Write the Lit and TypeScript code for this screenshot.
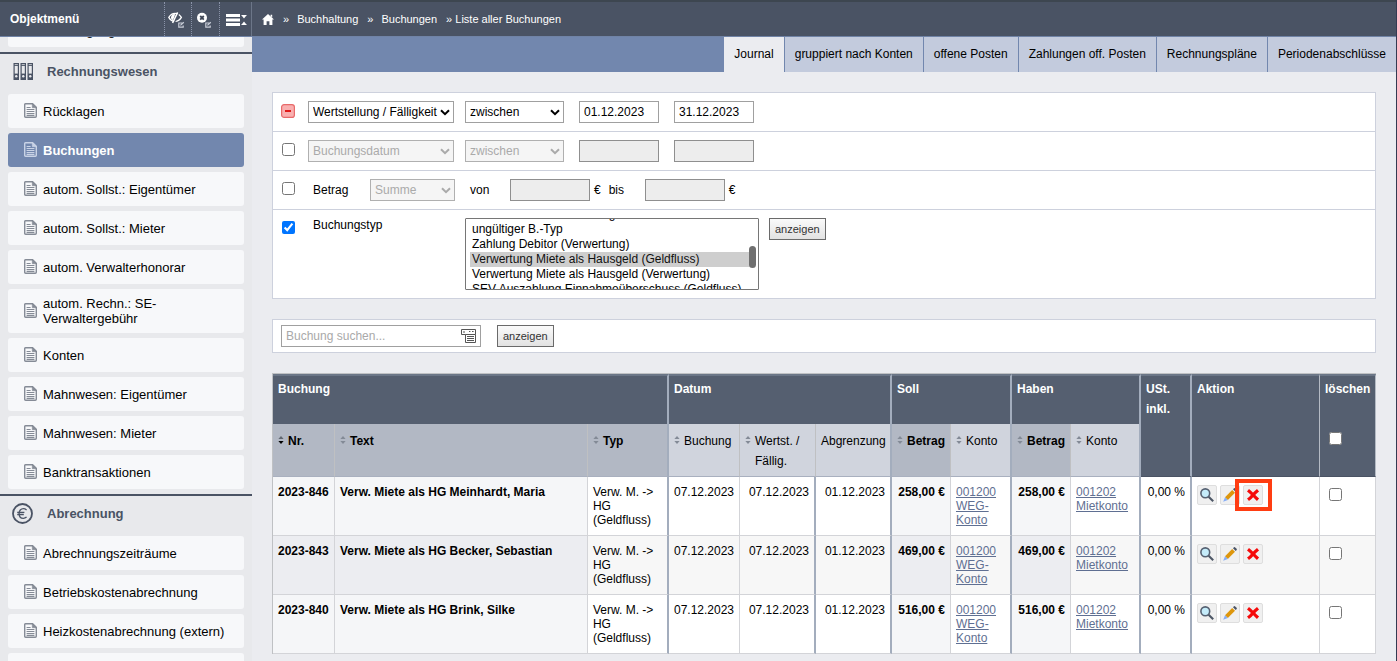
import { LitElement, html, svg, css, nothing } from "lit";
import { customElement } from "lit/decorators.js";
import { classMap } from "lit/directives/class-map.js";

interface MenuItem {
  label: string;
  active?: boolean;
}

interface Booking {
  nr: string;
  text: string;
  amount: string;
  marked?: boolean;
}

const ACCOUNTING: MenuItem[] = [
  { label: "Rücklagen" },
  { label: "Buchungen", active: true },
  { label: "autom. Sollst.: Eigentümer" },
  { label: "autom. Sollst.: Mieter" },
  { label: "autom. Verwalterhonorar" },
  { label: "autom. Rechn.: SE-Verwaltergebühr" },
  { label: "Konten" },
  { label: "Mahnwesen: Eigentümer" },
  { label: "Mahnwesen: Mieter" },
  { label: "Banktransaktionen" },
];

const BILLING: MenuItem[] = [
  { label: "Abrechnungszeiträume" },
  { label: "Betriebskostenabrechnung" },
  { label: "Heizkostenabrechnung (extern)" },
  { label: "Wirtschaftsplan" },
];

const TABS = [
  "Journal",
  "gruppiert nach Konten",
  "offene Posten",
  "Zahlungen off. Posten",
  "Rechnungspläne",
  "Periodenabschlüsse",
];

const TYPES = [
  "interne Mietkonto-Buchung",
  "ungültiger B.-Typ",
  "Zahlung Debitor (Verwertung)",
  "Verwertung Miete als Hausgeld (Geldfluss)",
  "Verwertung Miete als Hausgeld (Verwertung)",
  "SEV Auszahlung Einnahmeüberschuss (Geldfluss)",
  "SEV Auszahlung Einnahmeüberschuss (Verwertung)",
];

const BOOKINGS: Booking[] = [
  { nr: "2023-846", text: "Verw. Miete als HG Meinhardt, Maria", amount: "258,00 €", marked: true },
  { nr: "2023-843", text: "Verw. Miete als HG Becker, Sebastian", amount: "469,00 €" },
  { nr: "2023-840", text: "Verw. Miete als HG Brink, Silke", amount: "516,00 €" },
];

const docIcon = html`<svg class="doc" width="13" height="15" viewBox="0 0 13 15" aria-hidden="true">
  <path d="M1.5 .7H8.6L12.3 4.4V13.3Q12.3 14.3 11.3 14.3H1.7Q.7 14.3 .7 13.3V1.7Q.7 .7 1.5 .7Z" fill="none" stroke="currentColor" stroke-width="1.4"/>
  <path d="M8.3 .8V4.7H12.2Z" fill="currentColor" stroke="currentColor" stroke-width=".6"/>
  <path d="M2.6 4.5H6.6M2.6 6.5H10.4M2.6 8.5H10.4M2.6 10.5H10.4M2.6 12.4H10.4" stroke="currentColor" stroke-width="1.2"/>
</svg>`;

const binder = (x: number) => svg`<g transform="translate(${x} 0)">
  <rect x=".6" y=".6" width="4.3" height="15.8" fill="none" stroke="currentColor" stroke-width="1.2"/>
  <path d="M.6 2.4H4.9" stroke="currentColor" stroke-width="1"/>
  <rect x=".6" y="10.6" width="4.3" height="5.8" fill="currentColor"/>
  <circle cx="2.75" cy="13.2" r="1.2" fill="#e8e9ec"/>
</g>`;

const bindersIcon = html`<svg width="21" height="17" viewBox="0 0 21 17" aria-hidden="true">
  ${binder(1.5)}${binder(8.5)}${binder(15.5)}
</svg>`;

const euroIcon = html`<svg width="21" height="21" viewBox="0 0 21 21" aria-hidden="true" fill="none" stroke="currentColor">
  <circle cx="10.5" cy="10.5" r="9.5" stroke-width="1.8"/>
  <path d="M14.6 6.9Q13 5.6 11.4 5.6C8.8 5.6 7.1 7.7 7.1 10.5S8.8 15.4 11.4 15.4Q13 15.4 14.6 14.1M5.2 9.4H12.4M5.2 11.5H11.8" stroke-width="1.3"/>
</svg>`;

const editMark = svg`<path d="M14.4 11H10.8V15.2H15.2V13.4M12.4 13.4L15.8 10.2" fill="none" stroke="#c9ced8" stroke-width="1.2"/>`;

const eyeIcon = html`<svg width="17" height="17" viewBox="0 0 17 17" aria-hidden="true">
  <path d="M.8 5.4Q3.2 1.4 7 1.4T13.4 5.4Q11 9.4 7 9.4T.8 5.4Z" fill="none" stroke="#fff" stroke-width="1.3"/>
  <path d="M7.2 2.2A3.200 3.200 0 0 0 5 8.2Z" fill="#fff"/>
  <path d="M11 .4L6 11.2" stroke="#4a5364" stroke-width="1.4"/>
  <path d="M9.6 .4L4.6 11" stroke="#fff" stroke-width="1.5"/>
  ${editMark}
</svg>`;

const closeIcon = html`<svg width="17" height="17" viewBox="0 0 17 17" aria-hidden="true">
  <circle cx="7" cy="5.8" r="5" fill="#fff"/>
  <path d="M5.2 4L8.8 7.6M8.8 4L5.2 7.6" stroke="#3d4554" stroke-width="1.8"/>
  ${editMark}
</svg>`;

const barsIcon = html`<svg width="22" height="12" viewBox="0 0 22 12" aria-hidden="true" fill="#fff">
  <rect x="0" y="0" width="14" height="3"/><rect x="0" y="4.5" width="14" height="3"/><rect x="0" y="9" width="14" height="3"/>
  <path d="M15.5 1H20.5V2H20L18 4.400L16 2H15.500ZM15.5 11V10H16L18 7.600L20 10H20.500V11Z"/>
</svg>`;

const homeIcon = html`<svg width="12" height="11" viewBox="0 0 12 11" aria-hidden="true" fill="#fff">
  <path d="M6 0L12 5.6H10.4V11H7.4V7.2H4.6V11H1.6V5.6H0ZM8.6 .7H10.2V3.4L8.6 2Z"/>
</svg>`;

const listIcon = html`<svg class="list-icon" width="16" height="15" viewBox="0 0 16 15" aria-hidden="true" fill="none" stroke="#555" stroke-width="1">
  <path d="M4.5 5.5H.5V.5H14.5V5.5M3 2V4M8 2.5H9.4M11 2.5H12.6M4.5 5.5H14.5V13.5H4.5ZM6 7.5H13M6 9.5H13M6 11.5H13"/>
</svg>`;

const minusIcon = html`<svg width="14" height="14" viewBox="0 0 14 14" aria-hidden="true">
  <rect x=".6" y=".6" width="12.8" height="12.8" rx="2.5" fill="#f9b0b0" stroke="#e86a6a" stroke-width="1.2"/>
  <rect x="4" y="6" width="6" height="2" fill="#e01b1b"/>
</svg>`;

const lensIcon = html`<svg width="16" height="16" viewBox="0 0 16 16" aria-hidden="true">
  <path d="M9.6 9.8L14.2 14.2" stroke="#4d5766" stroke-width="2.2"/>
  <circle cx="6.3" cy="6.3" r="4.4" fill="#c5ecfa" stroke="#566172" stroke-width="1.6"/>
</svg>`;

const pencilIcon = html`<svg width="16" height="16" viewBox="0 0 16 16" aria-hidden="true">
  <path d="M3 10.2L10.2 3L13 5.8L5.8 13Z" fill="#dd960c"/>
  <path d="M3 10.2L5.8 13L1.2 14.8Z" fill="#86adf5"/>
  <path d="M11 2.3L12 1.3Q12.6 .9 13.2 1.4L14.6 2.8Q15.1 3.4 14.7 4L13.7 5Z" fill="#4a5364"/>
</svg>`;

const crossIcon = html`<svg width="16" height="16" viewBox="0 0 16 16" aria-hidden="true">
  <path d="M3 3.2Q6 5.6 8.2 8T13 12.8M13 3.2Q9.6 6 7.6 8.4T3 12.8" fill="none" stroke="#f50a0a" stroke-width="3.2"/>
</svg>`;

const sorter = (down = false) => html`<svg class="sorter" width="6" height="8" viewBox="0 0 6 8" aria-hidden="true">
  <path d="M3 0L5.6 3H.4Z" fill=${down ? "#5f6670" : "#838a96"}/>
  <path d="M3 8L.4 5H5.6Z" fill=${down ? "#000" : "#838a96"}/>
</svg>`;

@customElement("app-topbar")
export class AppTopbar extends LitElement {
  static styles = css`
    :host {
      display: flex;
      box-sizing: border-box;
      height: 37px;
      border-top: 2px solid #3d4650;
      border-bottom: 1px solid #7083a6;
      background: #4a5364;
      color: #fff;
    }
    .brand {
      display: flex;
      flex: none;
      box-sizing: border-box;
      width: 252px;
      border-right: 1px solid #6c7688;
    }
    .title {
      flex: 1;
      margin: 0;
      padding-left: 10px;
      font-size: 12px;
      line-height: 34px;
    }
    .tool {
      display: flex;
      align-items: center;
      box-sizing: border-box;
      width: 27px;
      padding: 2px 0 0 3px;
      border: 0;
      border-left: 1px dotted #8a93a8;
      background: none;
    }
    .tool + .tool {
      width: 28px;
    }
    .tool.wide {
      width: 32px;
      padding-left: 6px;
    }
    .crumbs {
      display: flex;
      align-items: center;
      gap: 8px;
      padding-left: 10px;
      font-size: 11px;
      line-height: 14px;
    }
    .crumbs a {
      display: flex;
      color: #fff;
      text-decoration: none;
    }
    .crumbs a + span {
      padding-left: 1px;
    }
  `;

  render() {
    return html`
      <div class="brand">
        <h1 class="title">Objektmenü</h1>
        <button class="tool" aria-label="Ausblenden">${eyeIcon}</button>
        <button class="tool" aria-label="Schließen">${closeIcon}</button>
        <button class="tool wide" aria-label="Menü zuklappen">${barsIcon}</button>
      </div>
      <nav class="crumbs" aria-label="Brotkrumen">
        <a href="#" aria-label="Startseite">${homeIcon}</a>
        <span>»</span>
        <a href="#">Buchhaltung</a>
        <span>»</span>
        <a href="#">Buchungen</a>
        <span>» Liste aller Buchungen</span>
      </nav>
    `;
  }
}

@customElement("app-sidebar")
export class AppSidebar extends LitElement {
  static styles = css`
    :host {
      display: block;
      box-sizing: border-box;
      width: 252px;
      padding-top: 5px;
      overflow-y: auto;
      scrollbar-width: none;
      background: #e8e9ec;
    }
    .group {
      display: flex;
      flex-direction: column;
      gap: 5px;
      margin: 0;
      padding: 0 8px 5px;
      list-style: none;
    }
    .item {
      display: flex;
      align-items: center;
      gap: 6px;
      box-sizing: border-box;
      min-height: 34px;
      padding: 7px 8px 7px 16px;
      border-radius: 3px;
      background: #f7f8fa;
      color: #000;
      font-size: 13px;
      line-height: 15px;
      text-decoration: none;
    }
    .item.active {
      background: #7287ae;
      color: #fff;
      font-weight: bold;
    }
    .doc {
      flex: none;
      margin-bottom: 2px;
      color: #858b96;
    }
    .active .doc {
      color: #c9d3e6;
    }
    .section {
      display: flex;
      align-items: center;
      box-sizing: border-box;
      height: 42px;
      margin: 0;
      padding: 0 0 5px 12px;
      border-top: 2px solid #4a5364;
      color: #4a5364;
      font-size: 13px;
      line-height: 15px;
    }
    .section svg {
      margin-right: 14px;
    }
  `;

  firstUpdated() {
    this.scrollTop = 29;
  }

  private items(list: MenuItem[]) {
    return html`<ul class="group">
      ${list.map(
        (item) => html`<li>
          <a class=${classMap({ item: true, active: !!item.active })} href="#">${docIcon}<span>${item.label}</span></a>
        </li>`
      )}
    </ul>`;
  }

  render() {
    return html`
      ${this.items([{ label: "Übertragung" }])}
      <h2 class="section">${bindersIcon}Rechnungswesen</h2>
      ${this.items(ACCOUNTING)}
      <h2 class="section">${euroIcon}Abrechnung</h2>
      ${this.items(BILLING)}
    `;
  }
}

const controls = css`
  input[type="text"],
  select {
    box-sizing: border-box;
    height: 22px;
    margin: 0;
    padding: 0 4px;
    border: 1px solid #a0a0a0;
    border-radius: 0;
    background-color: #fff;
    color: #000;
    font: 12px/15px "Liberation Sans", Arial, sans-serif;
  }
  input[type="text"]:disabled {
    border-color: #8f8f8f;
    background-color: #ededed;
  }
  input[type="checkbox"] {
    display: block;
    width: 13px;
    height: 13px;
    margin: 0;
  }
  .drop {
    appearance: none;
    background-image: url("data:image/svg+xml,%3Csvg xmlns='http://www.w3.org/2000/svg' width='10' height='7'%3E%3Cpath d='M1 1.2L5 5.2L9 1.2' fill='none' stroke='%23000' stroke-width='2'/%3E%3C/svg%3E");
    background-repeat: no-repeat;
    background-position: right 3px center;
  }
  .drop:disabled {
    border-color: #b0b0b0;
    background-color: #f5f5f5;
    background-image: url("data:image/svg+xml,%3Csvg xmlns='http://www.w3.org/2000/svg' width='10' height='7'%3E%3Cpath d='M1 1.2L5 5.2L9 1.2' fill='none' stroke='%23aaa' stroke-width='2'/%3E%3C/svg%3E");
    color: #aaa;
    opacity: 1;
  }
  .show {
    box-sizing: border-box;
    height: 22px;
    padding: 0 5px;
    border: 1px solid #6a6a6a;
    border-radius: 0;
    background: linear-gradient(#fafafa, #e2e2e2);
    color: #333;
    font: 11px/14px "Liberation Sans", Arial, sans-serif;
  }
`;

@customElement("booking-filter")
export class BookingFilter extends LitElement {
  static styles = [
    controls,
    css`
      :host {
        display: block;
      }
      .panel {
        border: 1px solid #cdd1dd;
        background: #fff;
      }
      .row {
        display: flex;
        align-items: flex-start;
        padding: 8px 0;
      }
      .row + .row {
        border-top: 1px solid #cdd1dd;
      }
      .tick {
        width: 26px;
        padding: 3px 0 0 9px;
      }
      .remove {
        display: block;
        margin-left: -1px;
        padding: 0;
        border: 0;
        background: none;
      }
      .remove svg {
        display: block;
      }
      .field {
        display: flex;
        width: 157px;
      }
      .op {
        width: 114px;
      }
      .text {
        padding-left: 5px;
        line-height: 22px;
      }
      .text.top {
        line-height: 14px;
      }
      .amount {
        width: 57px;
      }
      .von {
        width: 40px;
      }
      .bis {
        width: 36px;
        padding-left: 8px;
      }
      .unit {
        padding-left: 4px;
        line-height: 22px;
      }
      .w146 {
        width: 146px;
      }
      .w99 {
        width: 99px;
      }
      .w85 {
        width: 85px;
      }
      .value {
        width: 80px;
      }
      .value + .value {
        margin-left: 15px;
      }
      .types {
        position: relative;
        width: 294px;
        margin-right: 10px;
      }
      select.list {
        display: block;
        width: 100%;
        height: 72px;
        padding: 0 4px;
        border: 1px solid #767676;
        border-radius: 1px;
        overflow-y: auto;
        scrollbar-width: none;
      }
      .list option {
        box-sizing: border-box;
        height: 15px;
        min-height: 15px;
        padding: 0 2px;
        line-height: 15px;
      }
      .list option:checked {
        background: #cecece linear-gradient(#cecece, #cecece);
        color: #111;
      }
      .thumb {
        position: absolute;
        top: 28px;
        right: 3px;
        width: 7px;
        height: 22px;
        border-radius: 4px;
        background: #6f6f6f;
      }
      .search {
        display: flex;
        gap: 16px;
        margin-top: 20px;
        padding: 5px 8px;
      }
      .box {
        position: relative;
        width: 200px;
      }
      .box input[type="text"] {
        display: block;
        width: 100%;
      }
      .box input::placeholder {
        color: #a9a9a9;
      }
      .list-icon {
        position: absolute;
        top: 4px;
        right: 4px;
      }
    `,
  ];

  firstUpdated() {
    const list = this.renderRoot.querySelector<HTMLSelectElement>(".list");
    if (list) list.scrollTop = 12;
  }

  render() {
    return html`
      <form class="panel" @submit=${(e: Event) => e.preventDefault()}>
        <div class="row">
          <div class="tick"><button class="remove" type="button" aria-label="Filter entfernen">${minusIcon}</button></div>
          <div class="field">
            <select class="drop w146" aria-label="Datumsfeld"><option>Wertstellung / Fälligkeit</option></select>
          </div>
          <div class="op">
            <select class="drop w99" aria-label="Vergleich"><option>zwischen</option></select>
          </div>
          <input class="value" type="text" aria-label="Datum von" value="01.12.2023" />
          <input class="value" type="text" aria-label="Datum bis" value="31.12.2023" />
        </div>
        <div class="row">
          <div class="tick"><input type="checkbox" aria-label="Buchungsdatum filtern" /></div>
          <div class="field">
            <select class="drop w146" aria-label="Zweites Datumsfeld" disabled><option>Buchungsdatum</option></select>
          </div>
          <div class="op">
            <select class="drop w99" aria-label="Zweiter Vergleich" disabled><option>zwischen</option></select>
          </div>
          <input class="value" type="text" aria-label="Zweites Datum von" disabled />
          <input class="value" type="text" aria-label="Zweites Datum bis" disabled />
        </div>
        <div class="row">
          <div class="tick"><input id="amount-on" type="checkbox" /></div>
          <div class="field">
            <label class="text amount" for="amount-on">Betrag</label>
            <select class="drop w85" aria-label="Betragsart" disabled><option>Summe</option></select>
          </div>
          <label class="text von" for="from">von</label>
          <input class="value" id="from" type="text" disabled />
          <span class="unit">€</span>
          <label class="text bis" for="to">bis</label>
          <input class="value" id="to" type="text" disabled />
          <span class="unit">€</span>
        </div>
        <div class="row">
          <div class="tick"><input id="type-on" type="checkbox" checked /></div>
          <div class="field"><label class="text top" for="type-on">Buchungstyp</label></div>
          <div class="types">
            <select class="list" multiple aria-label="Buchungstyp">
              ${TYPES.map((t, i) => html`<option ?selected=${i === 3}>${t}</option>`)}
            </select>
            <span class="thumb"></span>
          </div>
          <button class="show" type="submit">anzeigen</button>
        </div>
      </form>
      <form class="panel search" @submit=${(e: Event) => e.preventDefault()}>
        <div class="box">
          <input type="text" placeholder="Buchung suchen..." aria-label="Buchung suchen" />
          ${listIcon}
        </div>
        <button class="show" type="submit">anzeigen</button>
      </form>
    `;
  }
}

@customElement("booking-table")
export class BookingTable extends LitElement {
  static styles = [
    controls,
    css`
      :host {
        display: block;
      }
      table {
        width: 100%;
        border: 0 solid #bfc1c4;
        border-width: 1px 0 0 1px;
        border-spacing: 0;
        table-layout: fixed;
      }
      .c-nr { width: 62px; }
      .c-typ { width: 81px; }
      .c-date { width: 71px; }
      .c-value { width: 76px; }
      .c-amount { width: 59px; }
      .c-soll { width: 61px; }
      .c-haben { width: 70px; }
      .c-ust { width: 51px; }
      .c-action { width: 128px; }
      .c-del { width: 56px; }
      th,
      td {
        border: 0 solid #d3d4d8;
        border-width: 0 1px 1px 0;
        text-align: left;
        vertical-align: top;
      }
      .top th {
        padding: 3px 0 25px 5px;
        border-top: 2px solid #6b7687;
        border-right-color: #b4bac4;
        border-bottom: 0;
        background: #555f70;
        color: #fff;
        line-height: 20px;
      }
      .top th.full {
        border-bottom: 1px solid #4a5364;
        padding-bottom: 0;
      }
      .sub th {
        padding: 7px 0 5px 5px;
        border-right-color: #bfc0c2;
        border-bottom-color: #a9b0bf;
        background: #d0d4dd;
        font-weight: normal;
        line-height: 20px;
      }
      .sub th.key {
        background: #b2b8c4;
        font-weight: bold;
      }
      .head {
        display: flex;
        gap: 4px;
      }
      .sorter {
        flex: none;
        margin-top: 5px;
      }
      td {
        padding: 8px 5px;
        background: #fff;
        line-height: 14px;
      }
      tr:nth-child(even) td {
        background: #f7f7f7;
      }
      td.key {
        background: #f5f6f8;
        font-weight: bold;
      }
      tr:nth-child(even) td.key {
        background: #ecedf1;
      }
      .num {
        text-align: right;
        white-space: nowrap;
      }
      .top th.group,
      .sub th.group,
      td.group {
        border-right: 2px solid #a3adbd;
      }
      td a {
        color: #5f6f92;
      }
      .actions {
        display: flex;
        gap: 3px;
      }
      .act {
        display: flex;
        position: relative;
        align-items: center;
        justify-content: center;
        box-sizing: border-box;
        width: 20px;
        height: 20px;
        padding: 0;
        border: 1px solid #dedede;
        border-radius: 2px;
        background: #f0f0f0;
      }
      .frame {
        position: absolute;
        top: -7px;
        left: -9px;
        box-sizing: border-box;
        width: 37px;
        height: 32px;
        border: 4px solid #ff3d12;
      }
      td.pick {
        padding: 11px 9px;
      }
      .all {
        padding: 33px 0 0 4px;
      }
    `,
  ];

  private row(b: Booking) {
    return html`<tr>
      <td class="key">${b.nr}</td>
      <td class="key">${b.text}</td>
      <td class="group">Verw. M. -&gt; HG (Geldfluss)</td>
      <td class="num">07.12.2023</td>
      <td class="num group">07.12.2023</td>
      <td class="num group">01.12.2023</td>
      <td class="key num">${b.amount}</td>
      <td class="group"><a href="#">001200 WEG-Konto</a></td>
      <td class="key num">${b.amount}</td>
      <td class="group"><a href="#">001202 Mietkonto</a></td>
      <td class="num group">0,00 %</td>
      <td>
        <div class="actions">
          <button class="act" aria-label="Ansehen">${lensIcon}</button>
          <button class="act" aria-label="Bearbeiten">${pencilIcon}</button>
          <button class="act" aria-label="Löschen">${crossIcon}${b.marked ? html`<span class="frame"></span>` : nothing}</button>
        </div>
      </td>
      <td class="pick"><input type="checkbox" aria-label="${b.nr} löschen" /></td>
    </tr>`;
  }

  render() {
    const sortable = (label: string, down = false) =>
      html`<div class="head">${sorter(down)}<span>${label}</span></div>`;
    return html`<table>
      <colgroup>
        <col class="c-nr" /><col /><col class="c-typ" />
        <col class="c-date" /><col class="c-value" /><col class="c-value" />
        <col class="c-amount" /><col class="c-soll" />
        <col class="c-amount" /><col class="c-haben" />
        <col class="c-ust" /><col class="c-action" /><col class="c-del" />
      </colgroup>
      <thead>
        <tr class="top">
          <th class="group" colspan="3">Buchung</th>
          <th class="group" colspan="3">Datum</th>
          <th class="group" colspan="2">Soll</th>
          <th class="group" colspan="2">Haben</th>
          <th class="group full" rowspan="2">USt. inkl.</th>
          <th class="full" rowspan="2">Aktion</th>
          <th class="full" rowspan="2">
            <label for="all">löschen</label>
            <div class="all"><input id="all" type="checkbox" /></div>
          </th>
        </tr>
        <tr class="sub">
          <th class="key">${sortable("Nr.", true)}</th>
          <th class="key">${sortable("Text")}</th>
          <th class="key group">${sortable("Typ")}</th>
          <th>${sortable("Buchung")}</th>
          <th>${sortable("Wertst. / Fällig.")}</th>
          <th class="group">Abgrenzung</th>
          <th class="key">${sortable("Betrag")}</th>
          <th class="group">${sortable("Konto")}</th>
          <th class="key">${sortable("Betrag")}</th>
          <th class="group">${sortable("Konto")}</th>
        </tr>
      </thead>
      <tbody>
        ${BOOKINGS.map((b) => this.row(b))}
      </tbody>
    </table>`;
  }
}

@customElement("app-root")
export class AppRoot extends LitElement {
  static styles = css`
    :host {
      display: grid;
      grid-template: auto minmax(0, 1fr) / auto minmax(0, 1fr);
      box-sizing: border-box;
      height: 100vh;
      overflow: hidden;
      border-right: 1px solid #343a52;
      background: #ebecf0;
      color: #000;
      font-family: "Liberation Sans", Arial, sans-serif;
      font-size: 12px;
    }
    app-topbar {
      grid-column: 1 / -1;
    }
    .tabs {
      display: flex;
      justify-content: flex-end;
      background: #7287ae;
    }
    .tab {
      padding: 0 10px;
      border-left: 1px solid #7287ae;
      background: #c3cbdd;
      color: #000;
      line-height: 35px;
      text-decoration: none;
      white-space: nowrap;
    }
    .tab.active {
      background: #ebecf0;
    }
    .content {
      display: flex;
      flex-direction: column;
      gap: 20px;
      padding: 20px;
    }
    main {
      overflow: hidden;
    }
  `;

  render() {
    return html`
      <app-topbar></app-topbar>
      <app-sidebar></app-sidebar>
      <main>
        <nav class="tabs">
          ${TABS.map((t, i) => html`<a class=${classMap({ tab: true, active: i === 0 })} href="#">${t}</a>`)}
        </nav>
        <div class="content">
          <booking-filter></booking-filter>
          <booking-table></booking-table>
        </div>
      </main>
    `;
  }
}
